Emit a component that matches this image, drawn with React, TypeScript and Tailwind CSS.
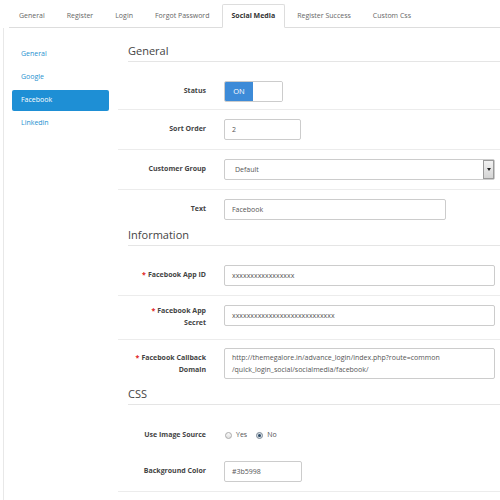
import React from "react";

const tabs = ["General", "Register", "Login", "Forgot Password", "Social Media", "Register Success", "Custom Css"];
const side = ["General", "Google", "Facebook", "Linkedin"];

function Legend({ children }: { children: React.ReactNode }) {
  return (
    <div className="ml-[10px] mb-[10px] h-[18px] border-b border-[#e5e5e5] text-[11px] leading-[14px] text-[#444]">
      {children}
    </div>
  );
}

function Row({
  label,
  req,
  children,
  border = true,
  pt = "pt-[9px]",
  pb = "pb-[9px]",
  lpt = "pt-[4px]",
}: {
  label: React.ReactNode;
  req?: boolean;
  children: React.ReactNode;
  border?: boolean;
  pt?: string;
  pb?: string;
  lpt?: string;
}) {
  return (
    <div className={`flex ${pt} ${pb} ${border ? "border-t border-[#ececec]" : ""}`}>
      <div className={`w-[97px] shrink-0 pr-[9px] ${lpt} text-right text-[7px] leading-[12px] font-bold text-[#444]`}>
        {req && <span className="text-[#e02020] mr-[2px]">*</span>}
        {label}
      </div>
      <div className="flex-1 pl-[9px] pr-[5px]">{children}</div>
    </div>
  );
}

const inputCls =
  "h-[21px] border border-[#ccc] rounded-[2px] px-[7px] text-[7px] leading-[19px] text-[#555] bg-white";

export default function App() {
  return (
    <div className="w-[500px] h-[500px] overflow-hidden bg-white font-['Open_Sans',sans-serif]">
      {/* tabs */}
      <div className="ml-[9px] flex h-[28px] items-end border-b border-[#ddd]">
        {tabs.map((t) => {
          const active = t === "Social Media";
          return (
            <div
              key={t}
              className={`mr-[2px] -mb-px flex h-[24px] items-center px-[9px] text-[7px] ${
                active
                  ? "rounded-t-[2px] border border-[#ddd] border-b-white bg-white font-bold text-[#333]"
                  : "border border-transparent text-[#666]"
              }`}
            >
              {t}
            </div>
          );
        })}
      </div>

      <div className="flex">
        {/* sidebar */}
        <div className="ml-[3px] w-[115px] shrink-0 border-l border-[#e8e8e8] h-[472px] pt-[16px] pl-[8px] pr-[9px]">
          {side.map((s) => {
            const active = s === "Facebook";
            return (
              <div
                key={s}
                className={`mb-[2px] flex h-[21px] items-center rounded-[2px] pl-[9px] text-[7px] ${
                  active ? "bg-[#1e8fd5] text-white" : "text-[#1e91cf]"
                }`}
              >
                {s}
              </div>
            );
          })}
        </div>

        {/* main */}
        <div className="flex-1 pt-[16px]">
          <Legend>General</Legend>
          <Row label="Status" border={false} pt="pt-[9px]" pb="pb-[7px]">
            <div className="flex h-[21px] w-[59px] overflow-hidden rounded-[2px] border border-[#ccc]">
              <div className="flex w-[28px] items-center justify-center bg-[#3d8bd8] text-[7.5px] text-white">ON</div>
              <div className="flex-1 bg-white" />
            </div>
          </Row>
          <Row label="Sort Order">
            <div className={`${inputCls} w-[77px]`}>2</div>
          </Row>
          <Row label="Customer Group">
            <div className="flex h-[21px] w-[271px] rounded-[2px] border border-[#ccc] bg-white">
              <div className="flex-1 px-[10px] text-[7px] leading-[19px] text-[#555]">Default</div>
              <div className="flex w-[11px] items-center justify-center border border-[#9a9a9a] bg-gradient-to-b from-[#f2f2f2] to-[#d4d4d4]">
                <div className="h-0 w-0 border-l-[2px] border-r-[2px] border-t-[3px] border-l-transparent border-r-transparent border-t-[#222]" />
              </div>
            </div>
          </Row>
          <Row label="Text" pb="pb-[8px]">
            <div className={`${inputCls} w-[222px]`}>Facebook</div>
          </Row>

          <Legend>Information</Legend>
          <Row label="Facebook App ID" req border={false} pt="pt-[9px]" pb="pb-[9px]">
            <div className={`${inputCls} w-[271px]`}>xxxxxxxxxxxxxxxxx</div>
          </Row>
          <Row
            label={
              <>
                Facebook App
                <br />
                Secret
              </>
            }
            req
            lpt="pt-[0px]"
            pb="pb-[10px]"
          >
            <div className={`${inputCls} w-[271px]`}>xxxxxxxxxxxxxxxxxxxxxxxxxxxx</div>
          </Row>
          <Row
            label={
              <>
                Facebook Callback
                <br />
                Domain
              </>
            }
            req
            pt="pt-[8px]"
            pb="pb-[8px]"
          >
            <div className="h-[31px] w-[271px] rounded-[2px] border border-[#ccc] px-[7px] pt-[3px] text-[7px] leading-[12px] text-[#555]">
              http://themegalore.in/advance_login/index.php?route=common
              <br />
              /quick_login_social/socialmedia/facebook/
            </div>
          </Row>

          <Legend>CSS</Legend>
          <Row label="Use Image Source" border={false} pt="pt-[10px]">
            <div className="flex h-[21px] items-center text-[7px] text-[#555]">
              <span className="ml-[1px] mr-[4px] h-[7px] w-[7px] rounded-full border border-[#aaa] bg-gradient-to-b from-[#fafafa] to-[#e0e0e0]" />
              <span>Yes</span>
              <span className="ml-[9px] mr-[4px] flex h-[7px] w-[7px] items-center justify-center rounded-full border border-[#7d8a96] bg-[#d6dde4]">
                <span className="h-[3px] w-[3px] rounded-full bg-[#2c4a66]" />
              </span>
              <span>No</span>
            </div>
          </Row>
          <Row label="Background Color" border={false} pt="pt-[6px]">
            <div className={`${inputCls} w-[78px]`}>#3b5998</div>
          </Row>
          <Row label="">
            <div className={`${inputCls} w-[78px]`} />
          </Row>
        </div>
      </div>
    </div>
  );
}
